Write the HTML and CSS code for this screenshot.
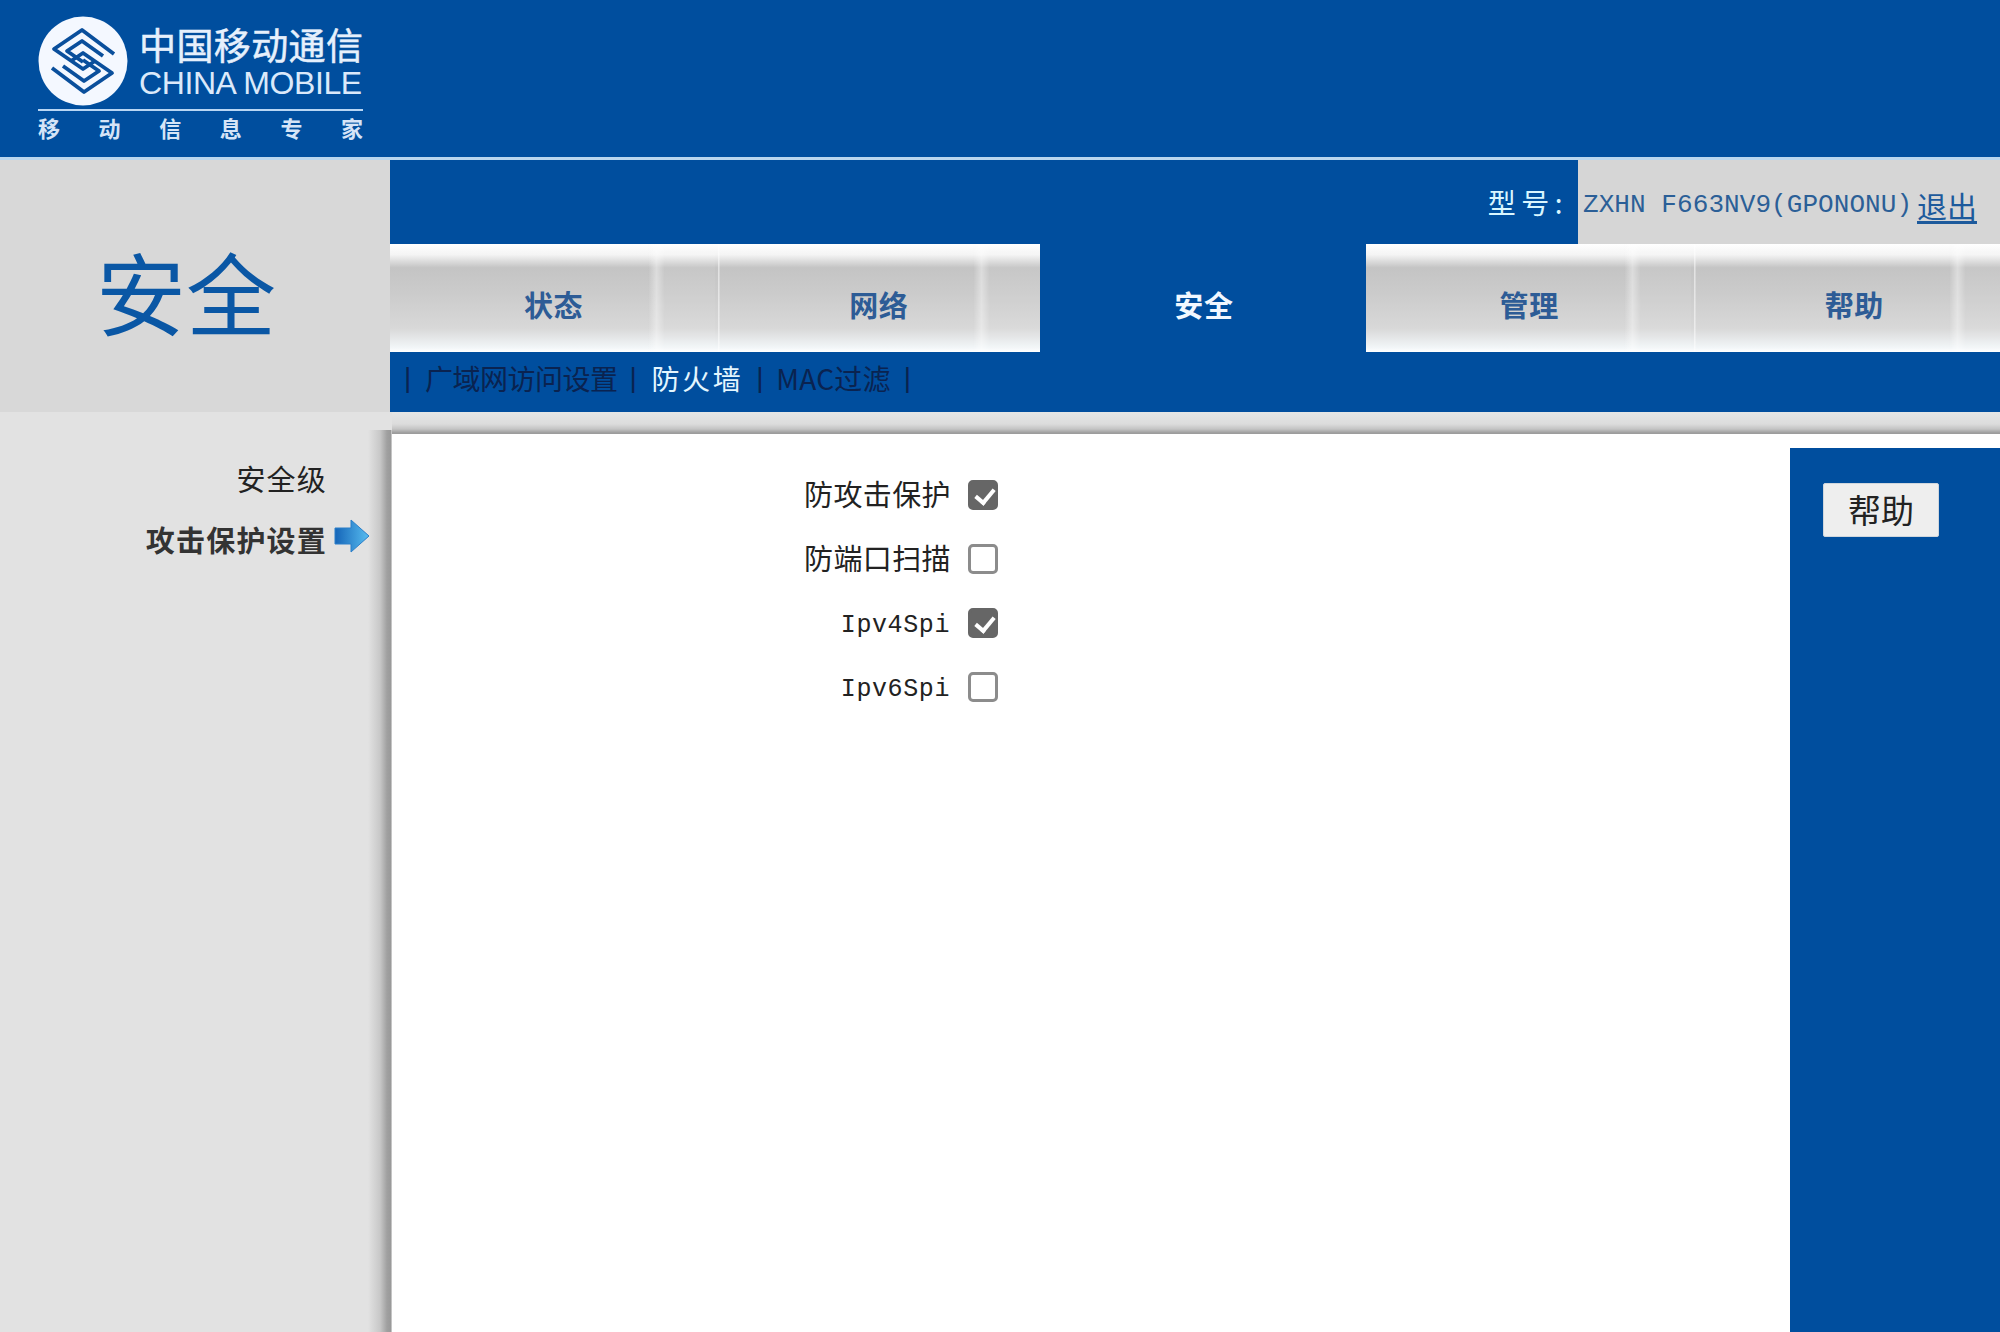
FILE: index.html
```html
<!DOCTYPE html>
<html lang="zh-CN">
<head>
<meta charset="utf-8">
<title>安全</title>
<link rel="stylesheet" href="styles.css">
</head>
<body>
<div class="page">
  <header class="banner">
    <div class="brand">
      <div class="brand-top">
        <svg class="logo" viewBox="0 0 90 90" aria-hidden="true">
          <circle cx="45" cy="45" r="44.5" fill="#f4f8ff"/>
          <g fill="none" stroke="#0a4f9c" stroke-width="3.8" stroke-linejoin="round" stroke-linecap="butt">
            <path d="M76 38 L44 14 L16 33 L45 53 L57 45"/>
            <path d="M65 40 L44 25 L29 35 L45 46"/>
            <path d="M14 52 L46 76 L74 57 L45 37 L33 45"/>
            <path d="M25 50 L46 65 L61 55 L45 44"/>
          </g>
        </svg>
        <div class="brand-names">
          <div class="brand-cn">中国移动通信</div>
          <div class="brand-en">CHINA MOBILE</div>
        </div>
      </div>
      <div class="brand-slogan"><span>移</span><span>动</span><span>信</span><span>息</span><span>专</span><span>家</span></div>
    </div>
  </header>

  <div class="top">
    <div class="section-title">安全</div>
    <nav class="nav">
      <div class="model-bar">
        <div class="model-label">型号:</div>
        <div class="model-value"><span class="model-name">ZXHN F663NV9(GPONONU)</span><a class="logout" href="#">退出</a></div>
      </div>
      <div class="tabs">
        <a class="tab" href="#">状态</a>
        <a class="tab tab-lined" href="#">网络</a>
        <a class="tab tab-active" href="#">安全</a>
        <a class="tab" href="#">管理</a>
        <a class="tab tab-lined" href="#">帮助</a>
      </div>
      <div class="subnav">
        <span class="sep">|</span><a class="sub sub-first" href="#">广域网访问设置</a>
        <span class="sep">|</span><a class="sub sub-active" href="#">防火墙</a>
        <span class="sep">|</span><a class="sub sub-mac" href="#">MAC过滤</a>
        <span class="sep">|</span>
      </div>
    </nav>
  </div>

  <main class="main">
    <aside class="side">
      <div class="side-item">安全级</div>
      <div class="side-item side-current">攻击保护设置
        <svg class="arrow" viewBox="0 0 36 34" aria-hidden="true">
          <defs>
            <linearGradient id="arrowFill" x1="0" x2="1" y1="0" y2="0">
              <stop offset="0" stop-color="#1565b8"/>
              <stop offset="1" stop-color="#58bdf0"/>
            </linearGradient>
          </defs>
          <path d="M1 9 H17 V1 L35 17 L17 33 V25 H1 Z" fill="url(#arrowFill)" stroke="#2b7fc9" stroke-width="1" stroke-linejoin="round"/>
        </svg>
      </div>
    </aside>
    <section class="content">
      <form class="form">
        <label class="row"><span class="row-label">防攻击保护</span><input class="check" type="checkbox" checked></label>
        <label class="row"><span class="row-label">防端口扫描</span><input class="check" type="checkbox"></label>
        <label class="row"><span class="row-label mono">Ipv4Spi</span><input class="check" type="checkbox" checked></label>
        <label class="row"><span class="row-label mono">Ipv6Spi</span><input class="check" type="checkbox"></label>
      </form>
      <div class="help-panel">
        <button class="help-btn" type="button">帮助</button>
      </div>
    </section>
  </main>
</div>
</body>
</html>
```
FILE: styles.css
```css
* { box-sizing: border-box; }
html, body { margin: 0; padding: 0; }
body {
  font-family: "Noto Sans CJK SC", "Liberation Sans", sans-serif;
  color: #222;
  background: #e2e2e2;
}
a { text-decoration: none; color: inherit; }

.page {
  width: 2000px;
  height: 1332px;
  overflow: hidden;
  display: flex;
  flex-direction: column;
}

/* banner */
.banner {
  height: 160px;
  flex: none;
  background: #004e9e;
  border-bottom: 3px solid #b9d6ee;
  padding: 16px 0 0 38px;
}
.brand { width: 325px; color: #e9f2fd; }
.brand-top { display: flex; align-items: flex-start; gap: 11px; }
.logo { width: 90px; height: 90px; flex: none; }
.brand-cn {
  font-size: 37px;
  line-height: 44px;
  height: 44px;
  margin-top: 6px;
  letter-spacing: 0.4px;
  white-space: nowrap;
  color: #e6f0fc;
  -webkit-text-stroke: 0.5px #e6f0fc;
}
.brand-en {
  font-family: "Liberation Sans", sans-serif;
  font-size: 32px;
  line-height: 34px;
  letter-spacing: -0.4px;
  white-space: nowrap;
  color: #dbe9fa;
}
.brand-slogan {
  display: flex;
  justify-content: space-between;
  margin-top: 3px;
  padding-top: 3px;
  border-top: 2px solid #b9d6f4;
  font-size: 22px;
  line-height: 26px;
  font-weight: 700;
  color: #d5e4f7;
}

/* top band */
.top { display: flex; height: 252px; flex: none; }
.section-title {
  width: 390px;
  flex: none;
  background: #d8d8d8;
  text-align: center;
  font-size: 90px;
  line-height: 106px;
  padding-top: 77px;
  padding-right: 18px;
  color: #0a57a5;
}
.nav { flex: 1; min-width: 0; background: #004e9e; display: flex; flex-direction: column; }

.model-bar { height: 84px; flex: none; display: flex; }
.model-label {
  flex: 1;
  text-align: right;
  font-size: 28px;
  line-height: 84px;
  color: #d9f6ff;
  padding-right: 10px;
  letter-spacing: 5.5px;
}
.model-value {
  width: 422px;
  flex: none;
  background: #d6d6d6;
  padding-left: 5px;
  padding-top: 6px;
  line-height: 78px;
  white-space: nowrap;
  display: flex;
}
.model-name {
  font-family: "Liberation Mono", monospace;
  font-size: 26px;
  letter-spacing: 0.07px;
  color: #2b5f97;
  width: 334px;
}
.logout {
  font-size: 30px;
  color: #1d5a9c;
  text-decoration: underline;
  text-underline-offset: 3px;
}

/* tabs */
.tabs { height: 108px; flex: none; display: flex; }
.tab {
  width: 325.2px;
  flex: none;
  text-align: center;
  padding-left: 2px;
  font-size: 29px;
  letter-spacing: 0.6px;
  font-weight: 700;
  line-height: 120px;
  color: #2d5c96;
  background:
    linear-gradient(to right,
      transparent 0, transparent 79.5%,
      rgba(255,255,255,.4) 82%, rgba(255,255,255,.05) 84.5%,
      rgba(255,255,255,.05) 100%),
    linear-gradient(to bottom,
      #ffffff 0, #f4f4f4 10%, #c4c4c4 22%,
      #cbcbcb 45%, #d8d8d8 78%, #f2f6f8 96%, #ffffff 100%);
}
.tab-lined {
  background:
    linear-gradient(to right,
      transparent 0, transparent .8%,
      rgba(255,255,255,.5) 1%, rgba(255,255,255,.5) 1.3%, transparent 1.5%,
      transparent 79.5%,
      rgba(255,255,255,.4) 82%, rgba(255,255,255,.05) 84.5%,
      rgba(255,255,255,.05) 100%),
    linear-gradient(to bottom,
      #ffffff 0, #f4f4f4 10%, #c4c4c4 22%,
      #cbcbcb 45%, #d8d8d8 78%, #f2f6f8 96%, #ffffff 100%);
}
.tab-active { background: #004e9e; color: #f2f8ff; }

/* sub nav */
.subnav {
  height: 60px;
  flex: none;
  display: flex;
  align-items: center;
  padding-left: 14px;
  padding-bottom: 8px;
  font-size: 28px;
  line-height: 52px;
  color: #0a2350;
  white-space: nowrap;
}
.sep { width: 6px; font-family: "Liberation Sans", sans-serif; }
.sub { letter-spacing: -0.5px; }
.sub-first { margin: 0 12px 0 15px; }
.sub-active { color: #e3f6ff; margin: 0 13px 0 16px; letter-spacing: 2.6px; }
.sub-mac { margin: 0 13px 0 14px; letter-spacing: 0.2px; }

/* main */
.main {
  flex: 1;
  min-height: 0;
  display: flex;
  background: #e2e2e2;
}
.side {
  width: 392px;
  flex: none;
  padding: 45px 20px 0 0;
  background: linear-gradient(to right, #e2e2e2 0, #e2e2e2 368px, #c8c8c8 380px, #a0a0a0 387px, #999 391px, #f0f0f0 392px) 0 18px no-repeat;
  font-size: 29px;
}
.side-item {
  height: 60px;
  line-height: 42px;
  padding-right: 45px;
  text-align: right;
  color: #222;
  letter-spacing: 1.2px;
  position: relative;
  white-space: nowrap;
}
.side-current { font-weight: 700; color: #333; line-height: 44px; }
.arrow { position: absolute; right: 2px; top: 2px; width: 36px; height: 34px; }

.content {
  flex: 1;
  min-width: 0;
  padding-top: 22px;
  background: linear-gradient(to bottom, #e4e6e6 0, #dcdcdc 12px, #c4c4c4 17px, #9c9c9c 21px, #9c9c9c 22px, #fff 22px);
  display: flex;
  justify-content: space-between;
}
.form {
  width: 606px;
  padding-top: 29px;
}
.row {
  display: flex;
  justify-content: flex-end;
  align-items: center;
  height: 64px;
  gap: 17px;
}
.row-label {
  font-size: 29px;
  letter-spacing: 0.4px;
  color: #222;
  line-height: 40px;
  padding-bottom: 4px;
}
.mono {
  font-family: "Liberation Mono", monospace;
  font-size: 25px;
  letter-spacing: 0.6px;
  margin-right: 1px;
  padding-bottom: 0;
  padding-top: 6px;
}
.check {
  appearance: none;
  -webkit-appearance: none;
  width: 30px;
  height: 30px;
  margin: 0;
  flex: none;
  background: #fff;
  border: 3px solid #8c8c8c;
  border-radius: 5px;
  position: relative;
}
.check:checked { background: #666; border-color: #666; }
.check:checked::after {
  content: "";
  position: absolute;
  left: 8px;
  top: 2px;
  width: 8px;
  height: 15px;
  border: solid #fff;
  border-width: 0 4px 4px 0;
  transform: rotate(40deg);
}

.help-panel {
  width: 210px;
  flex: none;
  margin-top: 14px;
  background: #004e9e;
  padding: 35px 0 0 33px;
}
.help-btn {
  width: 116px;
  height: 54px;
  padding: 0 0 4px;
  background: #eeeeee;
  border: 1px solid #cfd6dd;
  border-radius: 2px;
  font-family: inherit;
  font-size: 33px;
  line-height: 50px;
  color: #222;
}
```
